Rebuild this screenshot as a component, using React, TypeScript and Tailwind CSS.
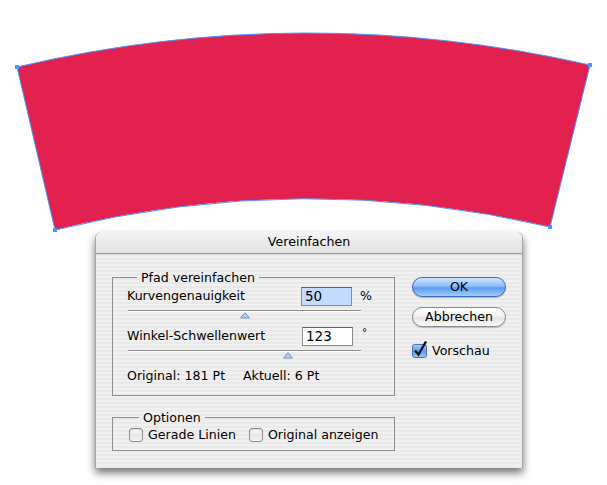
import React from 'react';

const font = { fontFamily: '"DejaVu Sans", "Liberation Sans", sans-serif' };

function Shape() {
  const corners: [number, number][] = [
    [17, 67],
    [590, 65],
    [550, 227],
    [55, 230],
  ];
  return (
    <svg width="607" height="232" viewBox="0 0 607 232" className="block">
      <path
        d="M17,67 Q303,0 590,65 L550,227 Q303,169 55,230 Z"
        fill="#e3214f"
        stroke="#4f93ff"
        strokeWidth="1"
      />
      {corners.map(([x, y], i) => (
        <rect key={i} x={x - 2} y={y - 2} width="4" height="4" fill="#4f93ff" />
      ))}
    </svg>
  );
}

function Thumb({ left }: { left: number }) {
  return (
    <svg width="10" height="7" viewBox="0 0 10 7" className="absolute top-[2px]" style={{ left }}>
      <polygon points="0.5,6 5,0.8 9.5,6" fill="#b4d0f4" stroke="#6e8fb8" strokeWidth="1" />
    </svg>
  );
}

function Slider({ thumb }: { thumb: number }) {
  return (
    <div className="relative ml-px h-px w-[233px] bg-[#8c8c8c] shadow-[0_1px_0_#ffffff]">
      <Thumb left={thumb} />
    </div>
  );
}

function Box() {
  return (
    <span className="inline-block h-[14px] w-[14px] rounded-[3px] border border-[#8e8e8e] bg-[linear-gradient(#ffffff,#e6e6e6_50%,#f4f4f4)] shadow-[inset_0_1px_1px_rgba(0,0,0,0.15)]" />
  );
}

function CheckedBox() {
  return (
    <svg width="16" height="18" viewBox="0 0 16 18" className="block">
      <defs>
        <linearGradient id="cb" x1="0" y1="0" x2="0" y2="1">
          <stop offset="0" stopColor="#a9cdfb" />
          <stop offset="0.5" stopColor="#5b9cf0" />
          <stop offset="1" stopColor="#9cc6fb" />
        </linearGradient>
      </defs>
      <rect x="0.5" y="4.5" width="14" height="13" rx="2" fill="url(#cb)" stroke="#4a6fae" />
      <path d="M3,10.5 L6.5,14.5 L14,1.5" fill="none" stroke="#111" strokeWidth="2.4" strokeLinejoin="miter" />
    </svg>
  );
}

export default function App() {
  return (
    <div className="h-[485px] w-[607px] overflow-hidden bg-white text-[12.6px] text-black" style={font}>
      <Shape />

      <div className="ml-[95px] flex h-[236px] w-[428px] flex-col rounded-t-[6px] border-x border-[#a6a6a6] bg-[repeating-linear-gradient(180deg,#f0f0f0_0px,#f0f0f0_2px,#e9e9e9_2px,#e9e9e9_4px)] shadow-[0_5px_9px_rgba(0,0,0,0.55)]">
        <div className="flex h-[22px] items-center justify-center rounded-t-[6px] border-b border-[#9a9a9a] bg-[linear-gradient(#f4f4f4,#e2e2e2)] leading-none shadow-[0_1px_0_#d8d8d8]">
          Vereinfachen
        </div>

        <div className="flex pl-[16px]">
          <div className="w-[283px]">
            <fieldset className="mt-[16px] border border-[#8f8f8f] pb-[11px] pl-[14px]">
              <legend className="ml-[10px] px-[4px] leading-[15px]">Pfad vereinfachen</legend>

              <div className="mt-[2px] flex h-[19px] items-center">
                <span className="w-[174px]">Kurvengenauigkeit</span>
                <span className="flex h-[19px] w-[51px] items-center border border-[#8a8a8a] border-t-[#5e5e5e] bg-[#c3dcfd] pl-[3px] text-[13.5px]">
                  50
                </span>
                <span className="ml-[8px]">%</span>
              </div>
              <div className="mt-[4px]">
                <Slider thumb={112} />
              </div>

              <div className="mt-[16px] flex h-[19px] items-center">
                <span className="w-[175px]">Winkel-Schwellenwert</span>
                <span className="flex h-[19px] w-[51px] items-center border border-[#8a8a8a] border-t-[#5e5e5e] bg-white pl-[3px] text-[13.5px]">
                  123
                </span>
                <span className="ml-[9px] -mt-[8px] text-[10px]">°</span>
              </div>
              <div className="mt-[4px]">
                <Slider thumb={155} />
              </div>

              <div className="mt-[18px] flex h-[15px] items-center">
                <span className="w-[116px]">Original: 181 Pt</span>
                <span>Aktuell: 6 Pt</span>
              </div>
            </fieldset>

            <fieldset className="mt-[14px] border border-[#8f8f8f] pb-[7px] pl-[16px]">
              <legend className="ml-[10px] px-[4px] leading-[15px]">Optionen</legend>
              <div className="mt-[2px] flex h-[16px] items-center">
                <Box />
                <span className="ml-[5px]">Gerade Linien</span>
                <span className="ml-[13px] flex items-center">
                  <Box />
                  <span className="ml-[5px]">Original anzeigen</span>
                </span>
              </div>
            </fieldset>
          </div>

          <div className="ml-[17px] mt-[23px] flex w-[94px] flex-col">
            <div className="flex h-[20px] items-center justify-center rounded-full border border-[#3c69b8] bg-[linear-gradient(#cfe4ff,#8dbdf9_45%,#5a9cf3_55%,#9fd0ff)] leading-none shadow-[0_1px_1px_rgba(0,0,0,0.25)]">
              OK
            </div>
            <div className="mt-[10px] flex h-[20px] items-center justify-center rounded-full border border-[#8b8b8b] bg-[linear-gradient(#ffffff,#f2f2f2_45%,#e4e4e4_55%,#fafafa)] leading-none shadow-[0_1px_1px_rgba(0,0,0,0.2)]">
              Abbrechen
            </div>
            <div className="mt-[13px] flex items-end">
              <CheckedBox />
              <span className="ml-[4px] leading-[15px]">Vorschau</span>
            </div>
          </div>
        </div>
      </div>
    </div>
  );
}
